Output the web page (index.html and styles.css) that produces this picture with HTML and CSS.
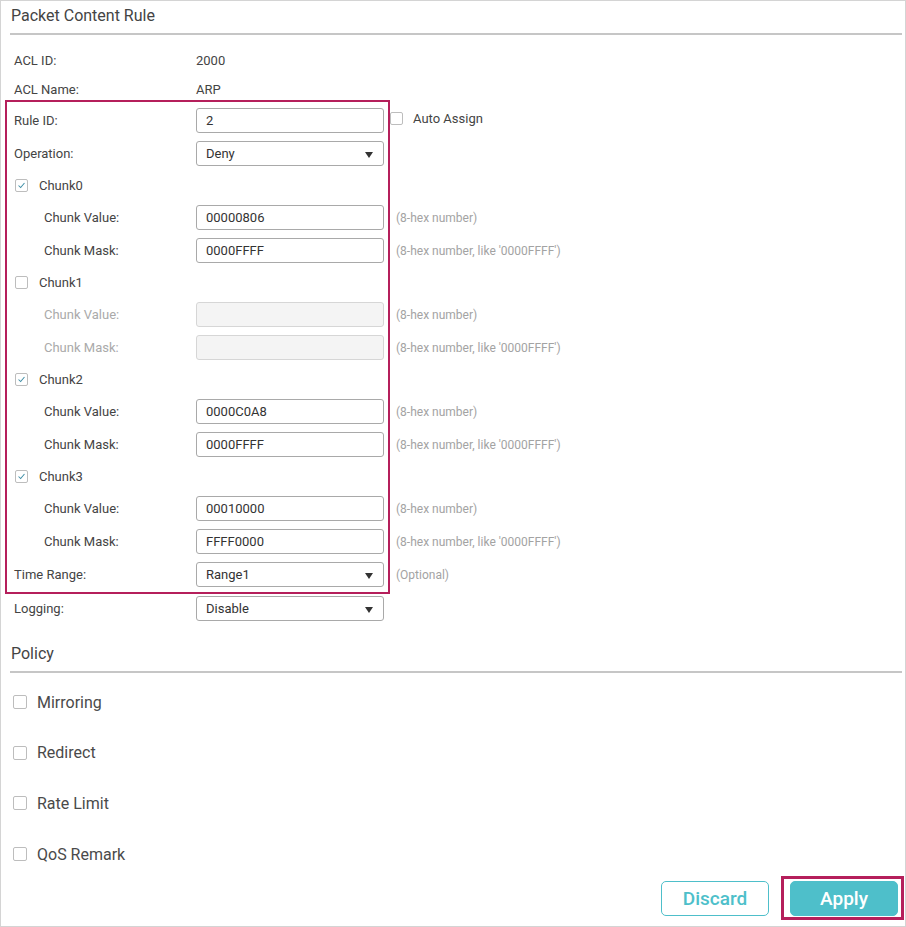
FILE: index.html
```html
<!DOCTYPE html>
<html>
<head>
<meta charset="utf-8">
<link rel="stylesheet" href="styles.css">
</head>
<body>
<div class="page">
  <div class="section-title">Packet Content Rule</div>

  <div class="form">
    <div class="row info"><span class="label">ACL ID:</span><span class="value">2000</span></div>
    <div class="row info"><span class="label">ACL Name:</span><span class="value">ARP</span></div>

    <div class="row field"><span class="label">Rule ID:</span><div class="input">2</div>
      <span class="auto"><span class="cb"></span><span>Auto Assign</span></span></div>
    <div class="row field"><span class="label">Operation:</span><div class="input select">Deny<span class="caret"></span></div></div>

    <div class="row chk"><span class="cb checked"><svg viewBox="0 0 13 13"><polyline points="3,6.5 5.5,9 10,3.5"/></svg></span><span>Chunk0</span></div>
    <div class="row field"><span class="label sub">Chunk Value:</span><div class="input">00000806</div><span class="hint">(8-hex number)</span></div>
    <div class="row field"><span class="label sub">Chunk Mask:</span><div class="input">0000FFFF</div><span class="hint">(8-hex number, like '0000FFFF')</span></div>

    <div class="row chk"><span class="cb"></span><span>Chunk1</span></div>
    <div class="row field off"><span class="label sub">Chunk Value:</span><div class="input disabled"></div><span class="hint">(8-hex number)</span></div>
    <div class="row field off"><span class="label sub">Chunk Mask:</span><div class="input disabled"></div><span class="hint">(8-hex number, like '0000FFFF')</span></div>

    <div class="row chk"><span class="cb checked"><svg viewBox="0 0 13 13"><polyline points="3,6.5 5.5,9 10,3.5"/></svg></span><span>Chunk2</span></div>
    <div class="row field"><span class="label sub">Chunk Value:</span><div class="input">0000C0A8</div><span class="hint">(8-hex number)</span></div>
    <div class="row field"><span class="label sub">Chunk Mask:</span><div class="input">0000FFFF</div><span class="hint">(8-hex number, like '0000FFFF')</span></div>

    <div class="row chk"><span class="cb checked"><svg viewBox="0 0 13 13"><polyline points="3,6.5 5.5,9 10,3.5"/></svg></span><span>Chunk3</span></div>
    <div class="row field"><span class="label sub">Chunk Value:</span><div class="input">00010000</div><span class="hint">(8-hex number)</span></div>
    <div class="row field"><span class="label sub">Chunk Mask:</span><div class="input">FFFF0000</div><span class="hint">(8-hex number, like '0000FFFF')</span></div>

    <div class="row field tall"><span class="label">Time Range:</span><div class="input select">Range1<span class="caret"></span></div><span class="hint">(Optional)</span></div>
    <div class="row field tall"><span class="label">Logging:</span><div class="input select">Disable<span class="caret"></span></div></div>
  </div>

  <div class="section-title policy-title">Policy</div>
  <div class="policy">
    <div class="prow"><span class="cb"></span><span>Mirroring</span></div>
    <div class="prow"><span class="cb"></span><span>Redirect</span></div>
    <div class="prow"><span class="cb"></span><span>Rate Limit</span></div>
    <div class="prow"><span class="cb"></span><span>QoS Remark</span></div>
  </div>

  <div class="actions">
    <button class="btn discard">Discard</button>
    <button class="btn apply">Apply</button>
  </div>

  <div class="mark mark-form"></div>
  <div class="mark mark-apply"></div>
</div>
</body>
</html>
```

FILE: styles.css
```css
html, body {
  margin: 0;
  padding: 0;
  background: #fff;
}
.page {
  position: relative;
  width: 906px;
  height: 927px;
  box-sizing: border-box;
  border: 1px solid #d4d4d4;
  font-family: Roboto, "Liberation Sans", Arial, sans-serif;
  color: #444;
  overflow: hidden;
}
.section-title {
  margin: 0 3px 0 9px;
  padding: 5px 0 7px 1px;
  line-height: 20px;
  font-size: 16px;
  color: #444;
  border-bottom: 2px solid #c6c6c6;
}
.form {
  margin-top: 11px;
  padding-left: 13px;
}
.row {
  display: flex;
  align-items: center;
  font-size: 13px;
}
.row.info { height: 29px; }
.row.field { height: 33px; }
.row.field.tall { height: 33.5px; }
.row.chk { height: 31px; padding-left: 1px; }
.label {
  width: 182px;
  flex: none;
  color: #444;
}
.label.sub {
  padding-left: 30px;
  width: 152px;
}
.value { color: #444; }
.input {
  box-sizing: border-box;
  width: 188px;
  height: 25px;
  flex: none;
  border: 1px solid #a9a9a9;
  border-radius: 3px;
  padding-left: 9px;
  line-height: 23px;
  color: #333;
  position: relative;
}
.input.disabled {
  background: #f4f4f4;
  border-color: #d6d6d6;
}
.off .label { color: #aaa; }
.caret {
  position: absolute;
  right: 10px;
  top: 10px;
  width: 0;
  height: 0;
  border-left: 4.5px solid transparent;
  border-right: 4.5px solid transparent;
  border-top: 6px solid #333;
}
.hint {
  margin-left: 12px;
  font-size: 12px;
  color: #a3a3a3;
}
.auto {
  display: flex;
  align-items: center;
  margin-left: 6px;
  margin-top: -4px;
  color: #444;
}
.auto .cb { margin-right: 10px; }
.cb {
  box-sizing: border-box;
  width: 13px;
  height: 13px;
  border: 1px solid #bdbdbd;
  border-radius: 2px;
  background: #fff;
  flex: none;
  display: inline-block;
}
.cb svg {
  display: block;
  width: 11px;
  height: 11px;
}
.cb svg polyline {
  fill: none;
  stroke: #3f8ea6;
  stroke-width: 1.2;
}
.row.chk .cb { margin-right: 11px; }
.policy-title {
  margin-top: 14px;
}
.policy {
  margin-top: 4px;
}
.prow {
  height: 50.6px;
  display: flex;
  align-items: center;
  padding-left: 12px;
  font-size: 16px;
  color: #4a4a4a;
}
.prow .cb {
  width: 14px;
  height: 14px;
  margin-right: 10px;
}
.actions {
  display: flex;
  justify-content: flex-end;
  gap: 21px;
  margin-top: 2px;
  padding-right: 7px;
}
.btn {
  box-sizing: border-box;
  width: 108px;
  height: 35px;
  border-radius: 5px;
  font-family: Roboto, "Liberation Sans", Arial, sans-serif;
  font-size: 19px;
  font-weight: 500;
  padding: 0;
}
.btn.discard {
  background: #fff;
  border: 1px solid #4ebfca;
  color: #4ebfca;
}
.btn.apply {
  background: #4ebfca;
  border: 1px solid #4ebfca;
  color: #fff;
}
.mark {
  position: absolute;
  box-sizing: border-box;
  border: 2px solid #b51f5b;
  pointer-events: none;
}
.mark-form {
  left: 4px;
  top: 99px;
  width: 385px;
  height: 494px;
}
.mark-apply {
  left: 780px;
  top: 875px;
  width: 123px;
  height: 44px;
  border-width: 3px;
}
```
